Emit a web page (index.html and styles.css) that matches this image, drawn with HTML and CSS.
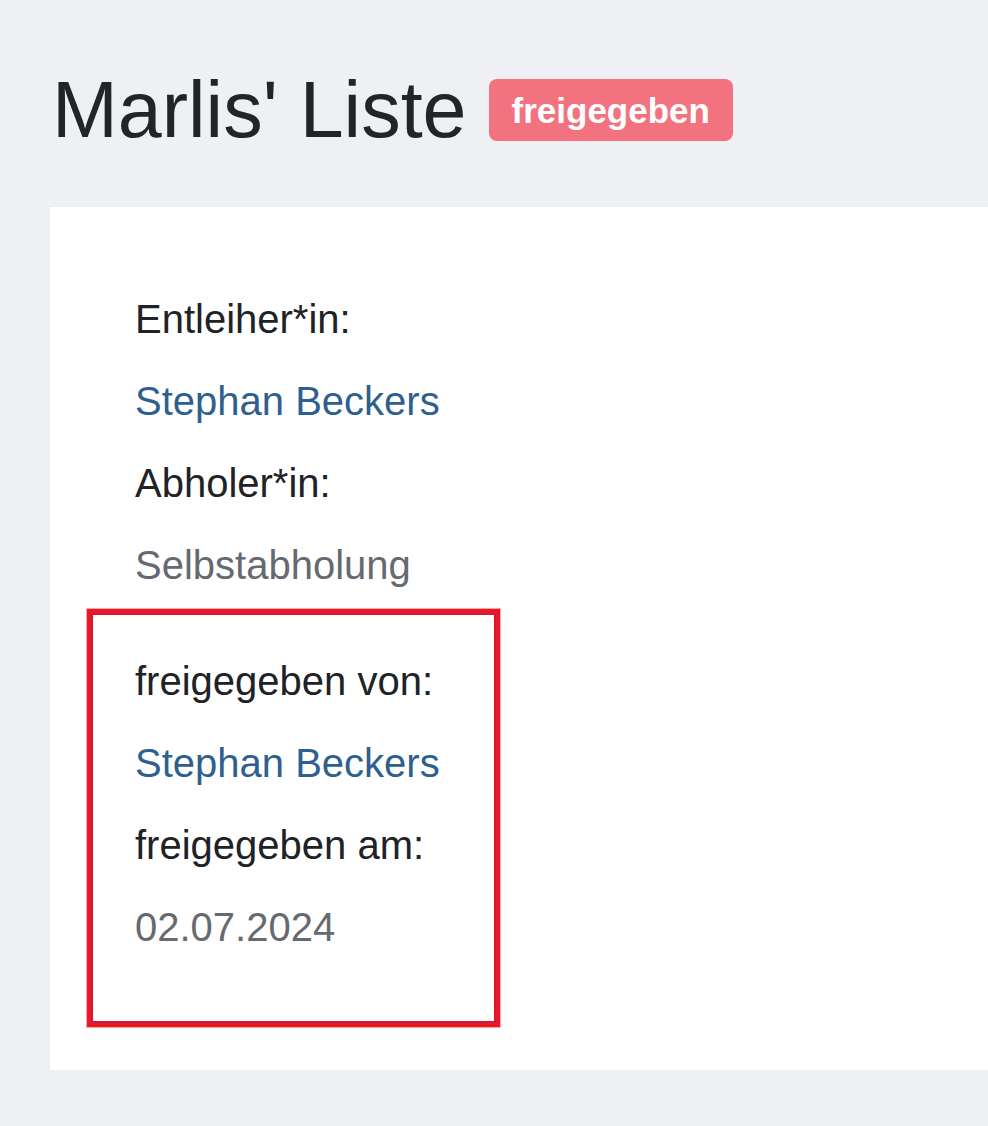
FILE: index.html
```html
<!DOCTYPE html>
<html lang="de">
<head>
<meta charset="utf-8">
<title>Marlis' Liste</title>
<link rel="stylesheet" href="styles.css">
</head>
<body>
<header class="page-header">
  <h1 class="title">Marlis' Liste</h1>
  <span class="badge">freigegeben</span>
</header>
<main class="card">
  <section class="group">
    <div class="label">Entleiher*in:</div>
    <a class="link" href="#">Stephan Beckers</a>
    <div class="label">Abholer*in:</div>
    <div class="muted">Selbstabholung</div>
  </section>
  <section class="group group-marked">
    <div class="label">freigegeben von:</div>
    <a class="link" href="#">Stephan Beckers</a>
    <div class="label">freigegeben am:</div>
    <div class="muted">02.07.2024</div>
  </section>
</main>
</body>
</html>
```
FILE: styles.css
```css
html, body {
  margin: 0;
  padding: 0;
}
body {
  background: #eff0f4;
  font-family: "Liberation Sans", Arial, sans-serif;
  color: #212326;
  overflow: hidden;
}
.page-header {
  display: flex;
  align-items: center;
  gap: 22px;
  padding: 70px 0 0 52px;
}
.title {
  margin: 0;
  font-size: 79px;
  line-height: 1;
  font-weight: 400;
  color: #222427;
}
.badge {
  display: inline-block;
  height: 62px;
  line-height: 64px;
  padding: 0 23px;
  border-radius: 8px;
  background: #f2737f;
  color: #fff;
  font-weight: 700;
  font-size: 35px;
}
.card {
  margin: 58px 0 0 50px;
  background: #fff;
  padding: 82px 0 43px 37px;
  box-shadow: 0 0 1px rgba(0,0,0,0.08);
}
.group {
  display: flex;
  flex-direction: column;
  align-items: flex-start;
  gap: 22px;
  padding-left: 48px;
  font-size: 40px;
  line-height: 60px;
}
.group-marked {
  box-sizing: border-box;
  width: 413px;
  margin-top: 14px;
  padding: 39px 0 67px 45px;
  border: 3px solid #f2141f;
  box-shadow: inset 0 0 0 1px #b8285a, inset 0 0 0 3px #ea1222, 0 0 0 1px rgba(245, 90, 100, 0.5);
}
.label {
  color: #202226;
}
.link {
  color: #2f5f8e;
  text-decoration: none;
}
.muted {
  color: #666a70;
}
```
